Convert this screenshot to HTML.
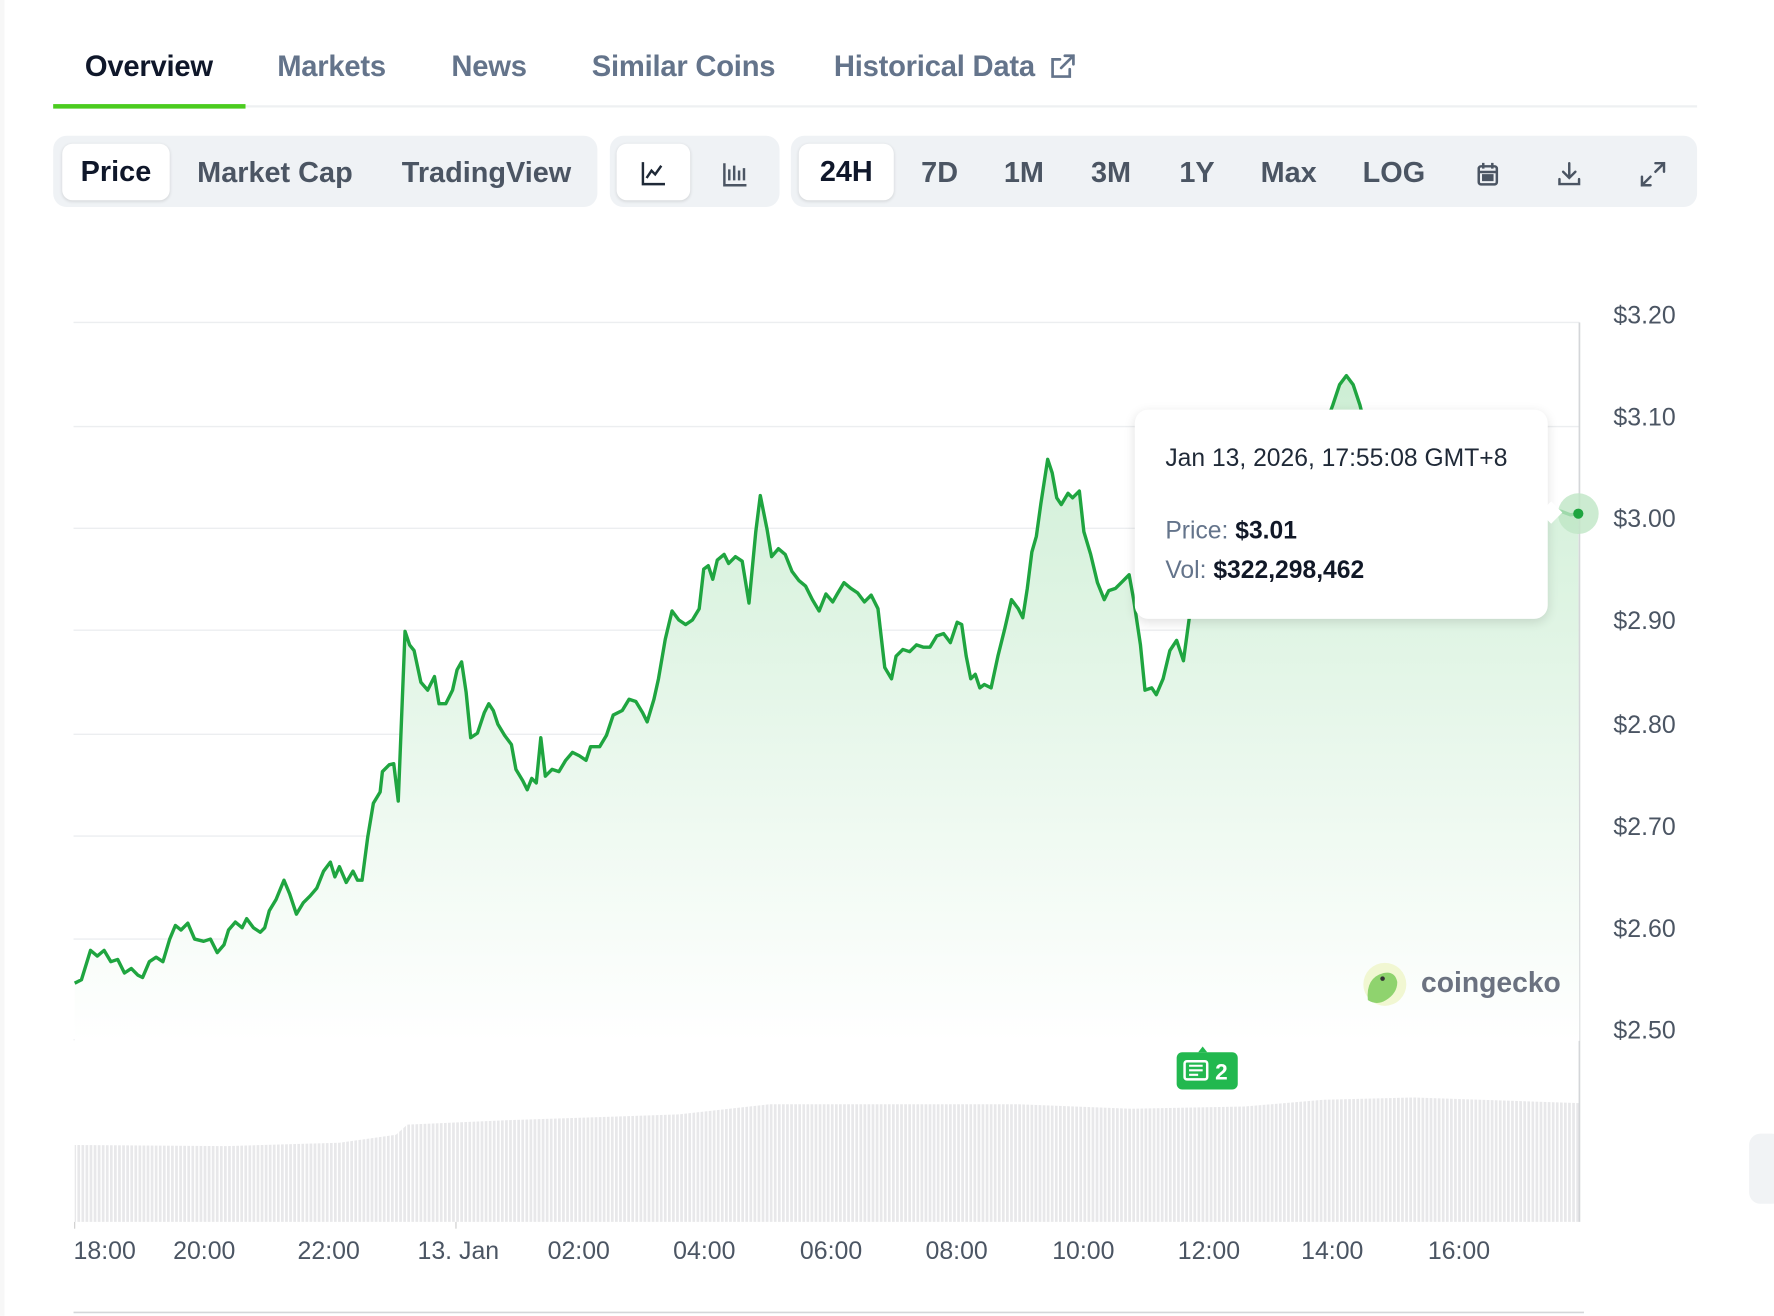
<!DOCTYPE html>
<html><head><meta charset="utf-8"><style>
html,body{margin:0;padding:0;background:#fff;overflow:hidden}
body{width:1774px;height:1316px;position:relative;font-family:"Liberation Sans",sans-serif}
#w{position:absolute;left:0;top:0;width:1568px;height:1163px;transform:scale(1.1314);transform-origin:0 0}
.t{position:absolute;top:45px;font-size:25.8px;font-weight:700;color:#64748b;letter-spacing:-0.2px}
.grp{position:absolute;top:120px;height:63px;background:#eff2f5;border-radius:12px}
.btn{position:absolute;top:8px;height:50px;line-height:50px;font-size:25.5px;font-weight:700;color:#4b5563;text-align:center}
.sel{top:7px;background:#fff;border-radius:9px;color:#0f172a;box-shadow:0 1px 3px rgba(0,0,0,.12)}
.yl{position:absolute;left:1426px;font-size:22px;color:#4b5563}
.xl{position:absolute;top:1093px;font-size:22px;color:#4b5563}
</style></head><body><div id="w">
<div style="position:absolute;left:0;top:0;width:4px;height:1163px;background:#f7f7f7"></div>
<div class="t" style="left:75px;color:#0f172a">Overview</div>
<div class="t" style="left:245px">Markets</div>
<div class="t" style="left:399px">News</div>
<div class="t" style="left:523px">Similar Coins</div>
<div class="t" style="left:737px">Historical Data</div>
<svg style="position:absolute;left:926px;top:46px" width="26" height="26" viewBox="0 0 24 24" fill="none" stroke="#64748b" stroke-width="2.2" stroke-linecap="round"><path d="M18 14v6H4V6h6M14 3h7v7M21 3L11 13"/></svg>
<div style="position:absolute;left:47px;top:93px;width:1453px;height:2px;background:#eef0f2"></div>
<div style="position:absolute;left:47px;top:92px;width:170px;height:4px;background:#4bcc1f"></div>

<div class="grp" style="left:47px;width:481px">
 <div class="btn sel" style="left:8px;width:95px">Price</div>
 <div class="btn" style="left:121px;width:150px">Market Cap</div>
 <div class="btn" style="left:300px;width:166px">TradingView</div>
</div>
<div class="grp" style="left:539px;width:150px">
 <div class="btn sel" style="left:6px;width:65px"><svg width="26" height="26" viewBox="0 0 24 24" fill="none" stroke="#1f2937" stroke-width="2" style="vertical-align:middle"><path d="M3 3v18h18M6 16l4-6 3 3 5-7"/></svg></div>
 <div class="btn" style="left:80px;width:62px"><svg width="26" height="26" viewBox="0 0 24 24" fill="none" stroke="#4b5563" stroke-width="2" style="vertical-align:middle"><path d="M3 3v18h18M7 8v9M11 5v12M15 9v8M19 7v10"/></svg></div>
</div>
<div class="grp" style="left:699px;width:801px">
 <div class="btn sel" style="left:7px;width:84px">24H</div>
 <div class="btn" style="left:104px;width:55px">7D</div>
 <div class="btn" style="left:178px;width:56px">1M</div>
 <div class="btn" style="left:253px;width:60px">3M</div>
 <div class="btn" style="left:335px;width:48px">1Y</div>
 <div class="btn" style="left:405px;width:70px">Max</div>
 <div class="btn" style="left:498px;width:70px">LOG</div>
 <div class="btn" style="left:596px;width:40px"><svg width="24" height="26" viewBox="0 0 24 24" fill="none" stroke="#4b5563" stroke-width="2.2" style="vertical-align:middle"><rect x="4" y="5" width="16" height="16" rx="2"/><path d="M8 2v5M16 2v5M4 10h16"/><rect x="8" y="13" width="8" height="4" fill="#4b5563"/></svg></div>
 <div class="btn" style="left:668px;width:40px"><svg width="26" height="26" viewBox="0 0 24 24" fill="none" stroke="#4b5563" stroke-width="2" stroke-linecap="round" style="vertical-align:middle"><path d="M12 3v12M7 10l5 5 5-5M4 16v4h16v-4"/></svg></div>
 <div class="btn" style="left:742px;width:40px"><svg width="26" height="26" viewBox="0 0 24 24" fill="none" stroke="#4b5563" stroke-width="2" stroke-linecap="round" style="vertical-align:middle"><path d="M14 3h7v7M21 3l-7 7M10 21H3v-7M3 21l7-7"/></svg></div>
</div>

<svg style="position:absolute;left:0;top:0" width="1568" height="1163">
<defs>
<linearGradient id="g" x1="0" y1="0" x2="0" y2="1"><stop offset="0" stop-color="#cdeed4"/><stop offset="1" stop-color="#ffffff"/></linearGradient>
<pattern id="vb" width="3.6" height="10" patternUnits="userSpaceOnUse"><rect width="2.4" height="10" fill="#e8e8ea"/></pattern>
</defs>
<g stroke="#eceef0" stroke-width="1.2">
<line x1="65" y1="285" x2="1396" y2="285"/><line x1="65" y1="377" x2="1396" y2="377"/><line x1="65" y1="467" x2="1396" y2="467"/><line x1="65" y1="557" x2="1396" y2="557"/><line x1="65" y1="649" x2="1396" y2="649"/><line x1="65" y1="739" x2="1396" y2="739"/><line x1="65" y1="830" x2="1396" y2="830"/><line x1="65" y1="919" x2="1396" y2="919"/>
</g>
<polygon fill="url(#vb)" points="66,1012 200,1013 300,1010 350,1003 360,994 450,990 600,985 680,976 900,976 1000,980 1100,978 1170,972 1250,970 1396,975 1396,1080 66,1080"/>
<line x1="1396" y1="285" x2="1396" y2="1080" stroke="#d4d6d9" stroke-width="1.5"/>
<line x1="65" y1="1160" x2="1400" y2="1160" stroke="#d4d6d9" stroke-width="1.5"/>
<line x1="66" y1="1080" x2="66" y2="1086" stroke="#ccc"/><line x1="403" y1="1080" x2="403" y2="1086" stroke="#ccc"/>
<path id="pl" fill="url(#g)" stroke="none" d=""/>
<polyline id="ln" fill="none" stroke="#1fa540" stroke-width="3" stroke-linejoin="round" points="66,869 72,866 80,840 86,845 92,840 98,850 104,848 110,860 116,856 122,862 126,864 132,850 138,846 144,850 150,830 155,818 160,822 166,816 172,830 180,832 186,830 192,842 198,835 202,822 208,815 214,820 218,812 224,820 230,824 234,820 238,805 244,795 251,778 256,790 262,808 268,798 274,792 280,785 286,770 292,762 296,775 300,766 306,780 312,770 316,778 320,778 325,740 330,710 336,700 338,682 344,676 348,675 352,708 358,558 362,570 366,575 372,603 378,610 384,598 388,622 394,622 400,610 404,592 408,585 412,612 416,652 422,648 428,630 432,622 436,628 440,640 446,650 452,658 456,680 462,690 466,698 470,688 474,692 478,652 482,686 488,680 494,682 500,672 506,665 512,668 518,672 522,660 530,660 536,650 542,632 550,628 556,618 562,620 568,630 572,638 578,618 582,600 588,565 594,540 600,548 606,552 612,548 618,538 622,503 626,500 630,512 634,495 640,490 644,498 650,492 656,496 662,533 668,470 672,438 678,468 682,492 688,485 694,490 700,505 706,513 712,518 718,530 724,540 730,525 736,532 740,525 746,515 752,520 758,524 764,532 770,526 776,538 782,590 788,600 792,580 798,574 804,576 810,570 816,572 822,572 828,562 834,560 840,568 846,550 850,552 854,580 858,600 862,596 866,608 870,605 876,608 882,580 888,556 894,530 900,538 904,546 908,520 912,488 916,474 920,445 926,406 930,418 934,440 938,446 944,436 948,440 954,434 958,470 964,490 970,515 976,530 980,522 986,520 992,514 998,508 1002,530 1008,570 1012,610 1018,608 1022,614 1028,600 1034,575 1040,566 1046,584 1052,540 1060,520 1070,500 1080,490 1090,470 1100,480 1110,460 1120,450 1130,440 1140,430 1150,420 1160,400 1170,380 1178,358 1184,340 1190,332 1196,340 1202,358 1210,390 1220,410 1240,420 1260,430 1280,425 1300,440 1320,435 1340,445 1360,448 1372,450 1380,452 1388,455 1395,454"/>
<circle cx="1395" cy="454" r="18" fill="#bfe6c6" opacity=".8"/>
<circle cx="1395" cy="454" r="4.5" fill="#1fa540"/>
<circle cx="1224" cy="870" r="19" fill="#f1f7d2"/>
<path d="M1209,884 q-2,-20 14,-24 q10,-2 12,8 q0,10 -10,16 q-8,5 -16,0z" fill="#8fd36e"/>
<circle cx="1222" cy="865" r="2" fill="#333"/>
<text x="1256" y="877" font-family="Liberation Sans" font-weight="700" font-size="25" fill="#6b7280">coingecko</text>
<rect x="1040" y="930" width="54" height="33" rx="5" fill="#22b84f"/>
<path d="M1063,925 l4,5 h-8z" fill="#22b84f"/>
<rect x="1047" y="938" width="20" height="16" rx="2" fill="none" stroke="#fff" stroke-width="2.2"/>
<path d="M1051,942h12M1051,946h12M1051,950h8" stroke="#fff" stroke-width="1.8"/>
<text x="1074" y="954" font-family="Liberation Sans" font-weight="700" font-size="20" fill="#fff">2</text>
</svg>
<script>
var p=document.getElementById('ln').getAttribute('points').trim();
document.getElementById('pl').setAttribute('d','M66,920 L'+p.replace(/ /g,' L')+' L1396,920Z');
</script>

<div style="position:absolute;left:1003px;top:362px;width:365px;height:185px;background:#fff;border-radius:12px;box-shadow:0 3px 10px rgba(0,0,0,.12)"></div>
<div style="position:absolute;left:1364px;top:446px;width:14px;height:14px;background:#fff;transform:rotate(45deg);"></div>
<div style="position:absolute;left:1030px;top:392px;font-size:21.8px;color:#1f2937">Jan 13, 2026, 17:55:08 GMT+8</div>
<div style="position:absolute;left:1030px;top:456px;font-size:21.8px;color:#64748b">Price: <b style="color:#111827">$3.01</b></div>
<div style="position:absolute;left:1030px;top:491px;font-size:21.8px;color:#64748b">Vol: <b style="color:#111827">$322,298,462</b></div>

<div class="yl" style="top:266px">$3.20</div><div class="yl" style="top:356px">$3.10</div><div class="yl" style="top:446px">$3.00</div><div class="yl" style="top:536px">$2.90</div><div class="yl" style="top:628px">$2.80</div><div class="yl" style="top:718px">$2.70</div><div class="yl" style="top:808px">$2.60</div><div class="yl" style="top:898px">$2.50</div>
<div class="xl" style="left:65px">18:00</div><div class="xl" style="left:153px">20:00</div><div class="xl" style="left:263px">22:00</div><div class="xl" style="left:369px">13. Jan</div><div class="xl" style="left:484px">02:00</div><div class="xl" style="left:595px">04:00</div><div class="xl" style="left:707px">06:00</div><div class="xl" style="left:818px">08:00</div><div class="xl" style="left:930px">10:00</div><div class="xl" style="left:1041px">12:00</div><div class="xl" style="left:1150px">14:00</div><div class="xl" style="left:1262px">16:00</div>
<div style="position:absolute;left:1546px;top:1002px;width:30px;height:62px;background:#f1f3f5;border-radius:10px"></div>
</div></body></html>
